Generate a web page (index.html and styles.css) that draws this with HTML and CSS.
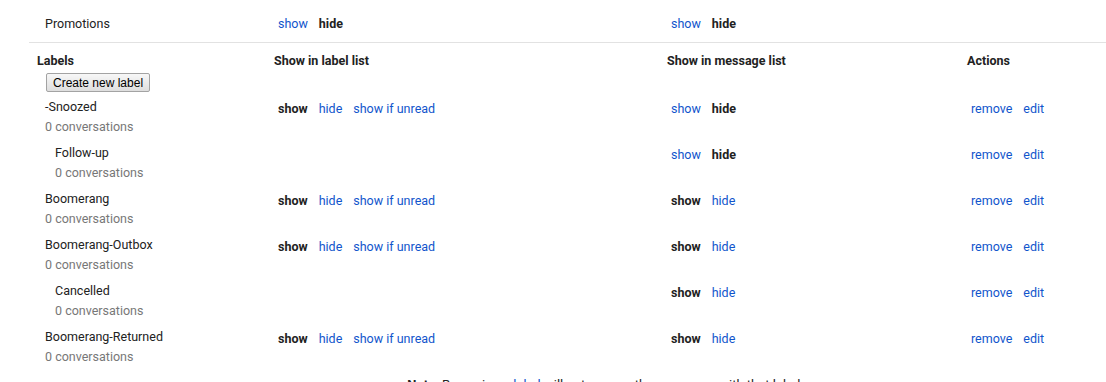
FILE: index.html
```html
<!DOCTYPE html>
<html lang="en">
<head>
    <meta charset="UTF-8">
    <title>Labels</title>
    <link rel="stylesheet" href="styles.css">
</head>
<body>
    <div class="settings">
        <div class="row cat-row">
            <div class="name">Promotions</div>
            <div class="opts"><a href="#">show</a><b>hide</b></div>
            <div class="opts"><a href="#">show</a><b>hide</b></div>
            <div></div>
        </div>

        <div class="labels">
            <div class="row head-row">
                <div class="head-first">
                    <div class="th">Labels</div>
                    <button class="create-btn">Create new label</button>
                </div>
                <div class="th">Show in label list</div>
                <div class="th">Show in message list</div>
                <div class="th">Actions</div>
            </div>

            <div class="row label-row">
                <div class="name">-Snoozed<div class="count">0 conversations</div></div>
                <div class="opts"><b>show</b><a href="#">hide</a><a href="#">show if unread</a></div>
                <div class="opts"><a href="#">show</a><b>hide</b></div>
                <div class="opts"><a href="#">remove</a><a href="#">edit</a></div>
            </div>
            <div class="row label-row">
                <div class="name sub">Follow-up<div class="count">0 conversations</div></div>
                <div class="opts"></div>
                <div class="opts"><a href="#">show</a><b>hide</b></div>
                <div class="opts"><a href="#">remove</a><a href="#">edit</a></div>
            </div>
            <div class="row label-row">
                <div class="name">Boomerang<div class="count">0 conversations</div></div>
                <div class="opts"><b>show</b><a href="#">hide</a><a href="#">show if unread</a></div>
                <div class="opts"><b>show</b><a href="#">hide</a></div>
                <div class="opts"><a href="#">remove</a><a href="#">edit</a></div>
            </div>
            <div class="row label-row">
                <div class="name">Boomerang-Outbox<div class="count">0 conversations</div></div>
                <div class="opts"><b>show</b><a href="#">hide</a><a href="#">show if unread</a></div>
                <div class="opts"><b>show</b><a href="#">hide</a></div>
                <div class="opts"><a href="#">remove</a><a href="#">edit</a></div>
            </div>
            <div class="row label-row">
                <div class="name sub">Cancelled<div class="count">0 conversations</div></div>
                <div class="opts"></div>
                <div class="opts"><b>show</b><a href="#">hide</a></div>
                <div class="opts"><a href="#">remove</a><a href="#">edit</a></div>
            </div>
            <div class="row label-row">
                <div class="name">Boomerang-Returned<div class="count">0 conversations</div></div>
                <div class="opts"><b>show</b><a href="#">hide</a><a href="#">show if unread</a></div>
                <div class="opts"><b>show</b><a href="#">hide</a></div>
                <div class="opts"><a href="#">remove</a><a href="#">edit</a></div>
            </div>

            <div class="note"><b>Note:</b> Removing a <a href="#">label</a> will not remove the messages with that label.</div>
        </div>
    </div>
</body>
</html>
```

FILE: styles.css
```css
body {
    margin: 0;
    font-family: Roboto, 'Liberation Sans', Arial, sans-serif;
    font-size: 12.5px;
    line-height: 20px;
    color: #222;
    background: #fff;
}
a {
    color: #15c;
    text-decoration: none;
}
b {
    font-weight: bold;
}
.settings {
    padding-left: 29px;
}
.row {
    display: grid;
    grid-template-columns: 237px 393px 300px 1fr;
    padding-left: 8px;
}
.cat-row {
    padding-top: 14px;
    padding-bottom: 8px;
}
.cat-row .name {
    padding-left: 8px;
}
.labels {
    border-top: 1px solid #e2e2e2;
}
.head-row {
    padding-top: 8px;
}
.th {
    font-weight: bold;
}
.create-btn {
    display: block;
    margin: 2px 0 5px 9px;
    height: 19px;
    padding: 0 6px;
    font-family: 'Liberation Sans', Arial, sans-serif;
    font-size: 12px;
    color: #000;
    background: linear-gradient(#f7f7f7, #dedede);
    border: 1px solid #a3a3a3;
    border-radius: 2px;
}
.label-row {
    padding-bottom: 6px;
}
.label-row .name {
    padding-left: 8px;
}
.label-row .name.sub {
    padding-left: 18px;
}
.count {
    color: #777;
}
.opts {
    display: flex;
    gap: 11px;
    padding-left: 4px;
    align-items: flex-start;
}
.label-row .opts {
    padding-top: 2px;
}
.note {
    text-align: center;
    padding-left: 76px;
    margin-top: 2px;
    font-size: 13px;
}
```
